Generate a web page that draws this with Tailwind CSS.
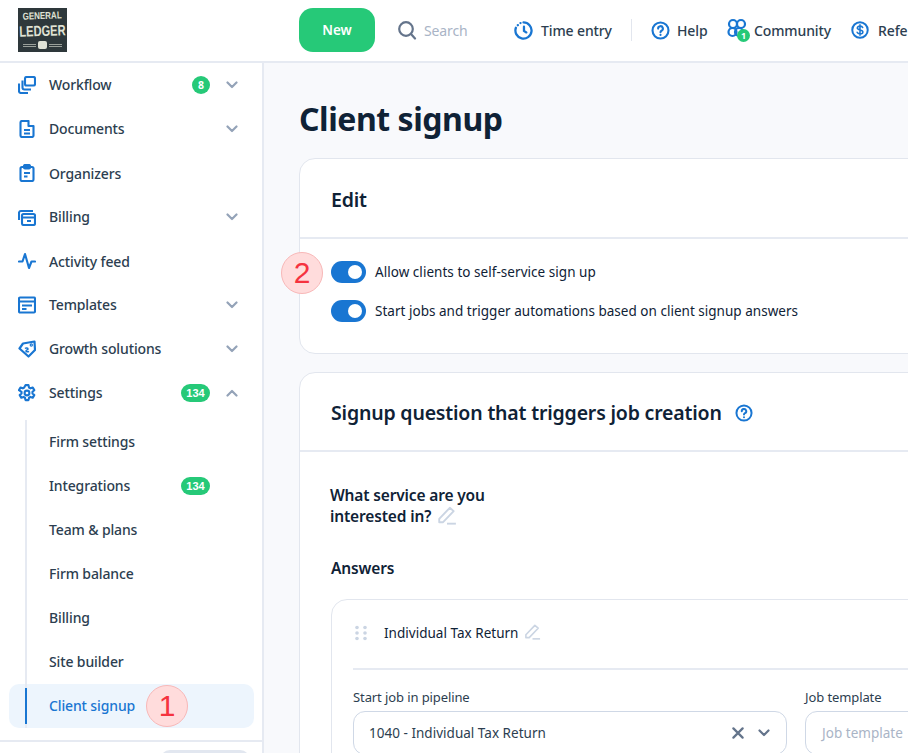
<!DOCTYPE html>
<html lang="en">
<head>
  <meta charset="UTF-8">
  <title>Client signup</title>
  <script src="https://cdn.jsdelivr.net/npm/@tailwindcss/browser@4"></script>
</head>
<body class="font-['Noto_Sans',sans-serif] text-[14px] text-[#0f2236] bg-white">
  <div class="relative w-[908px] h-[753px] overflow-hidden">

    <!-- top bar -->
    <header class="flex items-center h-[63px] pb-[1px] border-b-2 border-[#e6eaf2] bg-white">
      <div class="w-[299px] shrink-0 pl-[18px]">
        <div class="w-[49px] h-[44px] bg-[#2e383b] flex flex-col items-center pt-[2px] text-[#e0e3d5] font-['Liberation_Sans',sans-serif] font-bold leading-none overflow-hidden">
          <div class="flex flex-col items-center -rotate-[2deg]">
            <span class="block h-[12px] text-[10px] leading-[12px] scale-x-[0.8]">GENERAL</span>
            <span class="block h-[18px] text-[15px] leading-[18px] scale-x-[0.74]">LEDGER</span>
          </div>
          <div class="mt-[1px] flex items-center gap-[2px]">
            <span class="w-[13px] h-[3px] border-y border-[#9aa09a]"></span>
            <span class="w-[9px] h-[8px] bg-[#dfe2d6] rounded-[2px]"></span>
            <span class="w-[13px] h-[3px] border-y border-[#9aa09a]"></span>
          </div>
        </div>
      </div>
      <button class="w-[76px] h-[44px] rounded-[14px] bg-[#26c978] text-white font-semibold text-[13.5px] shrink-0">New</button>
      <svg class="ml-[22px] shrink-0 w-[20px] h-[20px] text-[#64748b]" viewBox="0 0 20 20" fill="none" stroke="currentColor" stroke-width="2.2" stroke-linecap="round"><circle cx="9" cy="9" r="6.8"/><path d="M14 14l4 4.5"/></svg>
      <span class="ml-[7px] text-[14px] text-[#a9b4c6] tracking-[-0.12px] shrink-0 w-[44px]">Search</span>
      <svg class="ml-[46px] shrink-0 w-[19px] h-[19px] text-[#1976d2]" viewBox="0 0 20 20" fill="none" stroke="currentColor" stroke-width="2.4" stroke-linecap="round"><path d="M10 1.500a8.500 8.500 0 1 1-8 5.600"/><path d="M4 4.400l.1-.1M6.800 2.200l.1 0"/><path d="M10.500 6v4.500l2.500 1.500"/></svg>
      <span class="ml-[8px] font-medium text-[#2c3e50] tracking-[-0.12px] shrink-0 w-[72px]">Time entry</span>
      <span class="ml-[18px] w-px h-[22px] bg-[#e2e6ee] shrink-0"></span>
      <svg class="ml-[19px] shrink-0 w-[19px] h-[19px] text-[#1976d2]" viewBox="0 0 20 20" fill="none" stroke="currentColor" stroke-width="2.2" stroke-linecap="round"><circle cx="10" cy="10" r="8.400"/><path d="M7.500 8a2.500 2.500 0 1 1 3.600 2.200c-.8.4-1.100.9-1.100 1.600"/><path d="M10 14.600v.1"/></svg>
      <span class="ml-[7px] font-medium text-[#2c3e50] tracking-[-0.12px] shrink-0 w-[32px]">Help</span>
      <div class="relative ml-[18px] w-[23px] h-[24px] shrink-0">
        <svg class="w-[20px] h-[20px] text-[#1976d2]" viewBox="0 0 20 20" fill="none" stroke="currentColor" stroke-width="2.200"><circle cx="6" cy="6" r="4"/><circle cx="14" cy="6" r="4"/><circle cx="5.500" cy="14" r="4"/><circle cx="12" cy="14" r="4"/></svg>
        <span class="absolute left-[10px] top-[11px] w-[13px] h-[13px] rounded-full bg-[#26c978] text-white text-[9px] font-bold leading-[13px] text-center">1</span>
      </div>
      <span class="ml-[4px] font-medium text-[#2c3e50] tracking-[-0.12px] shrink-0 w-[78px]">Community</span>
      <svg class="ml-[19px] shrink-0 w-[18px] h-[18px] text-[#1976d2]" viewBox="0 0 20 20" fill="none" stroke="currentColor" stroke-width="2.200" stroke-linecap="round"><circle cx="10" cy="10" r="8.600"/><path d="M13 7.300c-.4-1-1.500-1.600-3-1.600-1.700 0-3 .8-3 2.100 0 2.900 6.200 1.300 6.200 4.300 0 1.300-1.400 2.200-3.200 2.200-1.600 0-2.800-.7-3.200-1.800M10 4.300v11.400" stroke-width="1.700"/></svg>
      <span class="ml-[9px] font-medium text-[#2c3e50] tracking-[-0.12px] shrink-0 w-[30px] overflow-hidden whitespace-nowrap">Refe</span>
    </header>

    <div class="flex h-[690px]">
      <!-- sidebar -->
      <aside class="w-[264px] shrink-0 border-r-2 border-[#e6eaf2] bg-white flex flex-col text-[#2c3e50] font-medium tracking-[-0.13px]">
        <nav class="h-[677px] shrink-0">
          <a class="flex items-center h-[44px] pl-[18px] pr-[24px]">
            <svg class="w-[18px] h-[18px] text-[#1976d2] shrink-0" viewBox="0 0 18 18" fill="none" stroke="currentColor" stroke-width="2.100" stroke-linejoin="round"><rect x="7" y="1" width="10" height="8.500" rx="1.500"/><path d="M4.500 4.500v7a2 2 0 0 0 2 2H13"/><path d="M1 7.500v7.500a2 2 0 0 0 2 2h7"/></svg>
            <span class="ml-[13px] -mt-[2px] flex-1">Workflow</span>
            <span class="w-[18px] h-[18px] rounded-full bg-[#26c978] text-white text-[10.500px] font-bold leading-[18px] text-center mr-[16px] tracking-normal">8</span>
            <svg class="w-[12px] h-[8px] text-[#94a3b8]" viewBox="0 0 12 8" fill="none" stroke="currentColor" stroke-width="2.200" stroke-linecap="round" stroke-linejoin="round"><path d="M1.500 1.500L6 6l4.500-4.500"/></svg>
          </a>
          <a class="flex items-center h-[44px] pl-[18px] pr-[24px]">
            <svg class="w-[18px] h-[18px] text-[#1976d2] shrink-0" viewBox="0 0 18 18" fill="none" stroke="currentColor" stroke-width="2.100" stroke-linejoin="round"><path d="M2.500 2.500A1.500 1.500 0 0 1 4 1h6.500v5h5v9.500A1.500 1.500 0 0 1 14 17H4a1.500 1.500 0 0 1-1.500-1.500z"/><path d="M6 10h6M6 13.500h6"/></svg>
            <span class="ml-[13px] -mt-[2px] flex-1">Documents</span>
            <svg class="w-[12px] h-[8px] text-[#94a3b8]" viewBox="0 0 12 8" fill="none" stroke="currentColor" stroke-width="2.200" stroke-linecap="round" stroke-linejoin="round"><path d="M1.500 1.500L6 6l4.500-4.500"/></svg>
          </a>
          <a class="flex items-center h-[44px] pl-[18px] pr-[24px]">
            <svg class="w-[18px] h-[18px] text-[#1976d2] shrink-0" viewBox="0 0 18 18" fill="none" stroke="currentColor" stroke-width="2.100" stroke-linejoin="round"><rect x="2.500" y="3" width="13" height="14" rx="1.500"/><rect x="6" y="1" width="6" height="3.500" rx="1"/><path d="M6 9h6M6 12.500h3.500"/></svg>
            <span class="ml-[13px] flex-1">Organizers</span>
          </a>
          <a class="flex items-center h-[44px] pl-[18px] pr-[24px]">
            <svg class="w-[18px] h-[18px] text-[#1976d2] shrink-0" viewBox="0 0 18 18" fill="none" stroke="currentColor" stroke-width="2.100" stroke-linejoin="round"><rect x="4" y="6" width="13" height="11" rx="1.500"/><path d="M4 9.500h13M9 13h4"/><path d="M1 12V4.500A2 2 0 0 1 3 3h12"/></svg>
            <span class="ml-[13px] -mt-[2px] flex-1">Billing</span>
            <svg class="w-[12px] h-[8px] text-[#94a3b8]" viewBox="0 0 12 8" fill="none" stroke="currentColor" stroke-width="2.200" stroke-linecap="round" stroke-linejoin="round"><path d="M1.500 1.500L6 6l4.500-4.500"/></svg>
          </a>
          <a class="flex items-center h-[44px] pl-[18px] pr-[24px]">
            <svg class="w-[18px] h-[18px] text-[#1976d2] shrink-0" viewBox="0 0 18 18" fill="none" stroke="currentColor" stroke-width="2.100" stroke-linecap="round" stroke-linejoin="round"><path d="M1 9.500h3.500L7 2l4 14 2.500-6.500H17"/></svg>
            <span class="ml-[13px] flex-1">Activity feed</span>
          </a>
          <a class="flex items-center h-[44px] pl-[18px] pr-[24px]">
            <svg class="w-[18px] h-[18px] text-[#1976d2] shrink-0" viewBox="0 0 18 18" fill="none" stroke="currentColor" stroke-width="2.100"><rect x="1" y="1.500" width="16" height="15" rx="1"/><path d="M1 5.500h16M4 9.500h10M4 13h4.500"/></svg>
            <span class="ml-[13px] -mt-[2px] flex-1">Templates</span>
            <svg class="w-[12px] h-[8px] text-[#94a3b8]" viewBox="0 0 12 8" fill="none" stroke="currentColor" stroke-width="2.200" stroke-linecap="round" stroke-linejoin="round"><path d="M1.500 1.500L6 6l4.500-4.500"/></svg>
          </a>
          <a class="flex items-center h-[44px] pl-[18px] pr-[24px]">
            <svg class="w-[18px] h-[18px] text-[#1976d2] shrink-0" viewBox="0 0 18 18" fill="none" stroke="currentColor" stroke-width="2.200" stroke-linejoin="round"><path d="M1.500 8.500L5 3.500 16.500 1.500 17 10l-6.500 6.500z"/><path d="M7 8.500c1-1 3-.5 3 .5s-2 .8-2 2 2 1 3 .3" stroke-width="1.500"/><circle cx="13.300" cy="5" r=".6"/></svg>
            <span class="ml-[13px] -mt-[2px] flex-1">Growth solutions</span>
            <svg class="w-[12px] h-[8px] text-[#94a3b8]" viewBox="0 0 12 8" fill="none" stroke="currentColor" stroke-width="2.200" stroke-linecap="round" stroke-linejoin="round"><path d="M1.500 1.500L6 6l4.500-4.500"/></svg>
          </a>
          <a class="flex items-center h-[44px] pl-[18px] pr-[24px]">
            <svg class="w-[18px] h-[18px] text-[#1976d2] shrink-0" viewBox="0 0 24 24" fill="none" stroke="currentColor" stroke-width="2.800" stroke-linejoin="round"><circle cx="12" cy="12" r="3.200"/><path d="M10 1.500h4l.7 3.200 1.900 1.100 3.100-1 2 3.400-2.400 2.200v2.200l2.400 2.200-2 3.400-3.100-1-1.900 1.100-.7 3.200h-4l-.7-3.200-1.900-1.100-3.100 1-2-3.400 2.400-2.200v-2.200L1.300 8.200l2-3.400 3.100 1 1.900-1.100z"/></svg>
            <span class="ml-[13px] -mt-[2px] flex-1">Settings</span>
            <span class="h-[18px] w-[29px] rounded-full bg-[#26c978] text-white text-[11px] font-bold leading-[18px] text-center mr-[16px] tracking-normal font-['Liberation_Sans',sans-serif]">134</span>
            <svg class="w-[12px] h-[8px] text-[#94a3b8] rotate-180" viewBox="0 0 12 8" fill="none" stroke="currentColor" stroke-width="2.200" stroke-linecap="round" stroke-linejoin="round"><path d="M1.500 1.500L6 6l4.500-4.500"/></svg>
          </a>

          <div class="relative pt-[5px]">
            <a class="flex items-center h-[44px] pl-[49px] pr-[52px]"><span class="-mt-[2px]">Firm settings</span></a>
            <a class="flex items-center h-[44px] pl-[49px] pr-[52px]">
              <span class="flex-1 -mt-[2px]">Integrations</span>
              <span class="h-[18px] w-[29px] rounded-full bg-[#26c978] text-white text-[11px] font-bold leading-[18px] text-center tracking-normal font-['Liberation_Sans',sans-serif]">134</span>
            </a>
            <a class="flex items-center h-[44px] pl-[49px] pr-[52px]"><span class="-mt-[2px]">Team &amp; plans</span></a>
            <a class="flex items-center h-[44px] pl-[49px] pr-[52px]"><span class="-mt-[2px]">Firm balance</span></a>
            <a class="flex items-center h-[44px] pl-[49px] pr-[52px]"><span class="-mt-[2px]">Billing</span></a>
            <a class="flex items-center h-[44px] pl-[49px] pr-[52px]"><span class="-mt-[2px]">Site builder</span></a>
            <a class="relative flex items-center h-[44px] ml-[9px] mr-[8px] pl-[40px] rounded-[10px] bg-[#edf5fd] text-[#1976d2]">
              <span class="absolute left-[16px] top-[4px] bottom-[4px] w-[2px] bg-[#1976d2] z-10"></span>
              <span class="-mt-[2px]">Client signup</span>
            </a>
            <span class="absolute left-[25px] top-[5px] bottom-0 w-[2px] bg-[#e6eaf2]"></span>
          </div>
        </nav>
        <div class="border-t-2 border-[#e6eaf2] flex-1 min-h-0 overflow-hidden pl-[160px] pt-[8px]">
          <div class="w-[90px] h-[20px] rounded-t-[10px] bg-[#e2e7f0]"></div>
        </div>
      </aside>

      <!-- main -->
      <main class="flex-1 bg-[#f8f9fc] pl-[35px] pt-[36px] min-w-0">
        <h1 class="text-[32px] font-bold leading-[40px] text-[#0f2236] tracking-[-0.45px] mb-[19px]">Client signup</h1>

        <section class="w-[760px] h-[196px] bg-white border border-[#e2e6ee] rounded-[16px]">
          <div class="h-[80px] border-b-2 border-[#e6eaf2] pl-[31px] pt-[3px] flex items-center">
            <h2 class="text-[19.500px] font-semibold tracking-[-0.2px]">Edit</h2>
          </div>
          <div class="pl-[31px] pt-[22px] flex flex-col gap-[17px]">
            <div class="flex items-center h-[22px]">
              <span class="relative w-[35px] h-[22px] rounded-full bg-[#1976d2] shrink-0"><span class="absolute right-[4px] top-[4px] w-[14px] h-[14px] rounded-full bg-white"></span></span>
              <span class="ml-[9px] text-[13.500px] tracking-[0.04px]">Allow clients to self-service sign up</span>
            </div>
            <div class="flex items-center h-[22px]">
              <span class="relative w-[35px] h-[22px] rounded-full bg-[#1976d2] shrink-0"><span class="absolute right-[4px] top-[4px] w-[14px] h-[14px] rounded-full bg-white"></span></span>
              <span class="ml-[9px] text-[13.500px] tracking-[0.02px]">Start jobs and trigger automations based on client signup answers</span>
            </div>
          </div>
        </section>

        <section class="w-[760px] h-[500px] mt-[18px] bg-white border border-[#e2e6ee] rounded-[16px]">
          <div class="h-[79px] border-b-2 border-[#e6eaf2] pl-[31px] pt-[2px] flex items-center">
            <h2 class="text-[19.500px] font-semibold tracking-[-0.18px]">Signup question that triggers job creation</h2>
            <svg class="ml-[13px] w-[18px] h-[18px] text-[#1976d2]" viewBox="0 0 20 20" fill="none" stroke="currentColor" stroke-width="2.200" stroke-linecap="round"><circle cx="10" cy="10" r="8.400"/><path d="M7.500 8a2.500 2.500 0 1 1 3.600 2.200c-.8.400-1.100.9-1.100 1.600"/><path d="M10 14.600v.1"/></svg>
          </div>
          <div class="pl-[30px] pt-[33px]">
            <p class="w-[180px] text-[15.500px] font-semibold leading-[21px] tracking-[-0.15px]">What service are you interested in?
              <svg class="inline-block ml-[2px] -my-[4px] w-[20px] h-[20px] align-[1px] text-[#cbd5e3]" viewBox="0 0 18 18" fill="none" stroke="currentColor" stroke-width="1.700" stroke-linejoin="round"><path d="M2 12.500L11.500 2.500l3.500 3-9.500 10H2z"/><path d="M9 16.800h8"/></svg>
            </p>
            <h3 class="ml-[1px] mt-[31px] text-[15.500px] font-semibold leading-[21px] tracking-[-0.15px]">Answers</h3>
            <div class="ml-[1px] mt-[20px] w-[700px] h-[300px] border border-[#e2e6ee] rounded-[16px] px-[21px]">
              <div class="h-[70px] pb-[2px] border-b-2 border-[#e6eaf2] flex items-center">
                <svg class="w-[14px] h-[16px] text-[#cbd5e3] shrink-0 ml-[1px]" viewBox="0 0 14 16" fill="currentColor"><circle cx="3" cy="2.500" r="1.800"/><circle cx="11" cy="2.500" r="1.800"/><circle cx="3" cy="8" r="1.800"/><circle cx="11" cy="8" r="1.800"/><circle cx="3" cy="13.500" r="1.800"/><circle cx="11" cy="13.500" r="1.800"/></svg>
                <span class="ml-[16px] text-[13.500px] tracking-[0.02px]">Individual Tax Return</span>
                <svg class="ml-[6px] mb-[3px] w-[17px] h-[17px] text-[#cbd5e3]" viewBox="0 0 18 18" fill="none" stroke="currentColor" stroke-width="1.700" stroke-linejoin="round"><path d="M2 12.500L11.500 2.500l3.500 3-9.500 10H2z"/><path d="M9 16.800h8"/></svg>
              </div>
              <div class="flex gap-[18px] mt-[18px]">
                <div class="w-[434px] shrink-0">
                  <label class="block text-[13px] leading-[18px] text-[#2c3e50] tracking-[-0.1px]">Start job in pipeline</label>
                  <div class="mt-[5px] h-[44px] border border-[#cfd8e6] rounded-[12px] flex items-center pl-[15px] pr-[16px] bg-white">
                    <span class="flex-1 text-[13.500px] text-[#2c3e50] tracking-[0.02px]">1040 - Individual Tax Return</span>
                    <svg class="w-[12px] h-[12px] text-[#64748b]" viewBox="0 0 13 13" fill="none" stroke="currentColor" stroke-width="2.400" stroke-linecap="round"><path d="M1.500 1.500l10 10M11.500 1.500l-10 10"/></svg>
                    <svg class="ml-[14px] w-[12px] h-[8px] text-[#64748b]" viewBox="0 0 12 8" fill="none" stroke="currentColor" stroke-width="2.200" stroke-linecap="round" stroke-linejoin="round"><path d="M1.500 1.500L6 6l4.500-4.500"/></svg>
                  </div>
                </div>
                <div class="w-[200px] shrink-0">
                  <label class="block text-[13px] leading-[18px] text-[#2c3e50] tracking-[-0.1px]">Job template</label>
                  <div class="mt-[5px] h-[44px] border border-[#cfd8e6] rounded-[12px] flex items-center pl-[16px] bg-white">
                    <span class="text-[13.500px] text-[#a9b4c6] tracking-[0.02px]">Job template</span>
                  </div>
                </div>
              </div>
            </div>
          </div>
        </section>
      </main>
    </div>

    <!-- annotation markers over the page -->
    <span class="absolute left-[146px] top-[685px] w-[42px] h-[42px] rounded-full bg-[#ffdcdc] border border-[#f8b8b8] text-[#f5333f] text-[30px] leading-[40px] text-center font-['Liberation_Sans',sans-serif]">1</span>
    <span class="absolute left-[281px] top-[252px] w-[42px] h-[42px] rounded-full bg-[#ffdcdc] border border-[#f8b8b8] text-[#f5333f] text-[30px] leading-[40px] text-center font-['Liberation_Sans',sans-serif]">2</span>
  </div>
</body>
</html>
